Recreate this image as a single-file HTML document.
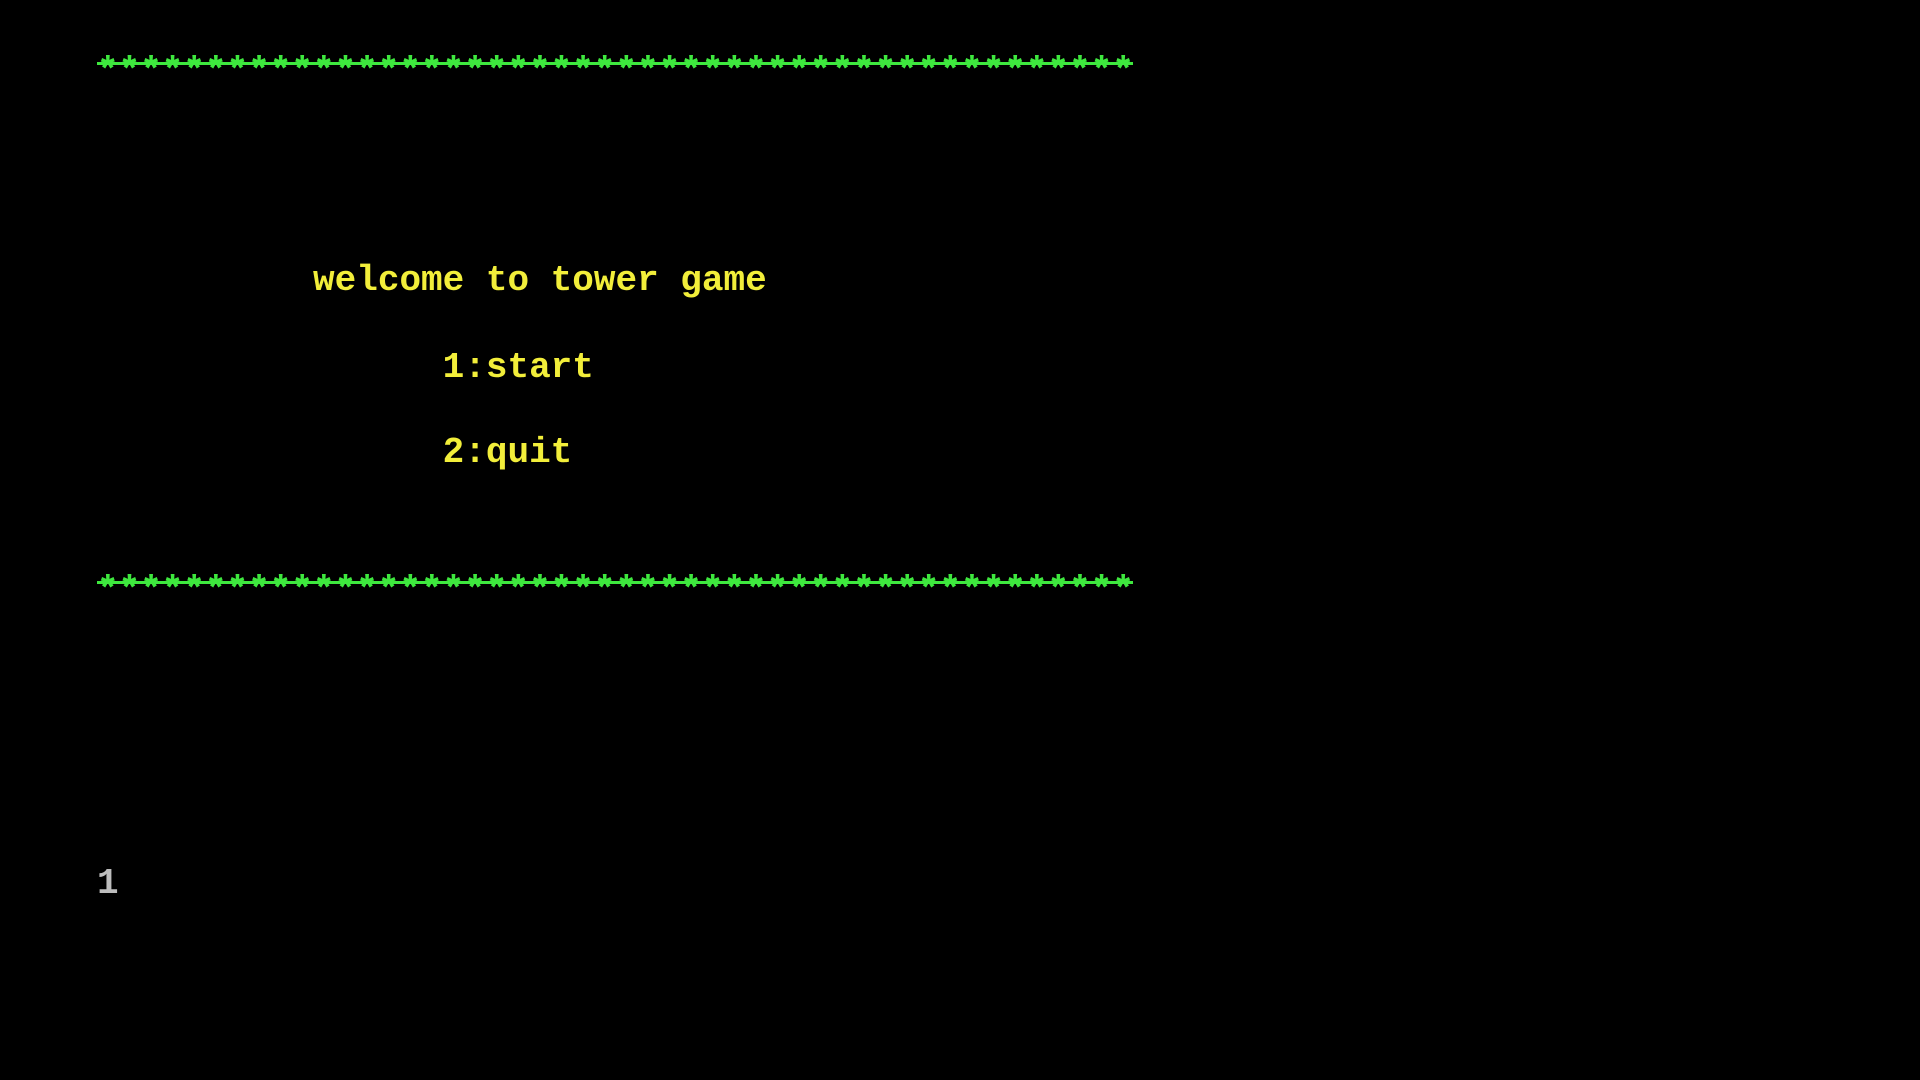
<!DOCTYPE html>
<html><head><meta charset="utf-8"><style>
html,body{margin:0;padding:0;background:#000;width:1920px;height:1080px;overflow:hidden}
.l{position:absolute;left:97px;font-family:"Liberation Mono",monospace;font-weight:bold;font-size:36px;line-height:40px;white-space:pre;letter-spacing:0}
.g{color:#3ee83e}.y{color:#f2ee3a}.w{color:#bdbdbd}
.bar{position:absolute;left:97px;width:1036px;height:3px;background:#3ee83e}
</style></head><body>
<div class="bar" style="top:62px"></div>
<div class="l g" style="top:52px">************************************************</div>
<div class="l y" style="top:261px">          welcome to tower game</div>
<div class="l y" style="top:348px">                1:start</div>
<div class="l y" style="top:433px">                2:quit</div>
<div class="bar" style="top:581px"></div>
<div class="l g" style="top:571px">************************************************</div>
<div class="l w" style="top:864px">1</div>
</body></html>
